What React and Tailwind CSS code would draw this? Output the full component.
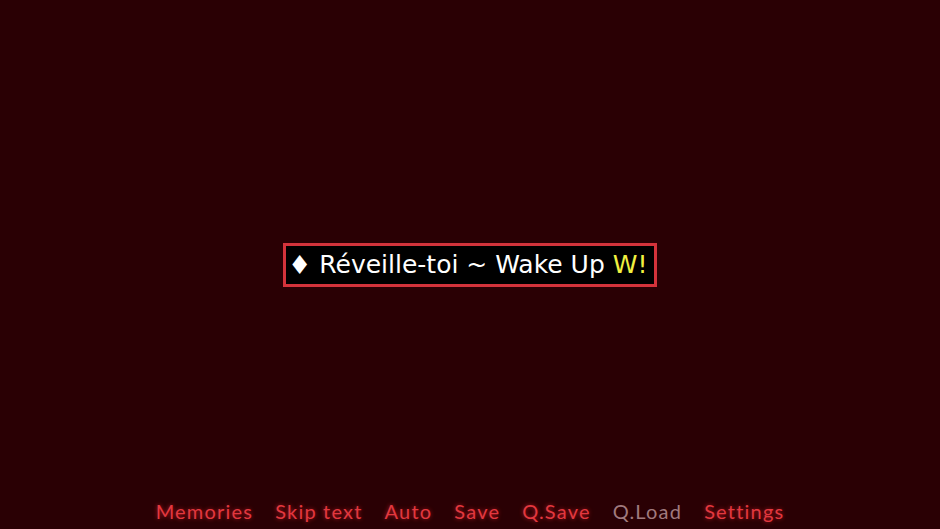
export default function App() {
  const menu = [
    { label: 'Memories', dim: false },
    { label: 'Skip text', dim: false },
    { label: 'Auto', dim: false },
    { label: 'Save', dim: false },
    { label: 'Q.Save', dim: false },
    { label: 'Q.Load', dim: true },
    { label: 'Settings', dim: false },
  ]

  return (
    <div className="w-[940px] h-[529px] bg-[#2a0004] grid grid-rows-[34px_1fr_34px] overflow-hidden">
      <div />

      {/* titre central */}
      <div className="flex items-center justify-center">
        <div className="border-[3px] border-[#d3333b] bg-black h-[44px] w-[374px] flex items-center pl-[2px] font-['DejaVu_Sans',sans-serif] text-[25px] text-white leading-none whitespace-nowrap">
          <span className="text-[26px] mr-[8px]">♦</span>
          <span>
            Réveille-toi ~ Wake Up <span className="text-[#f0f040]">W!</span>
          </span>
        </div>
      </div>

      {/* menu du bas */}
      <div className="flex items-start justify-center gap-[22px] pt-[1px] font-['Lato',sans-serif] font-normal text-[20px] tracking-[1.2px]">
        {menu.map((m) => (
          <span
            key={m.label}
            className={m.dim ? 'text-[#a07a7e]' : 'text-[#e2383f] [text-shadow:0_0_4px_rgba(255,40,50,0.6)]'}
          >
            {m.label}
          </span>
        ))}
      </div>
    </div>
  )
}
